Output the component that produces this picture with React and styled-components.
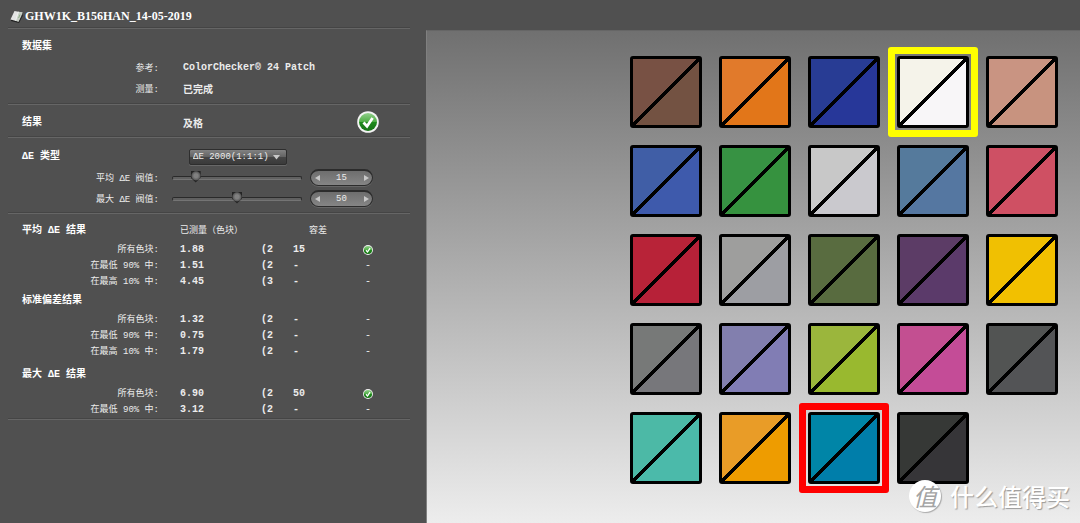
import React, { useState } from 'react';
import styled, { createGlobalStyle } from 'styled-components';

const GlobalStyle = createGlobalStyle`
  * {
    box-sizing: border-box;
  }
  body {
    margin: 0;
    background: #505050;
    color: #ececec;
    font-family: 'Liberation Mono', 'Noto Sans CJK SC', monospace;
    font-size: 9px;
  }
  button, input, select {
    font: inherit;
    color: inherit;
  }
`;

const Page = styled.div`
  display: flex;
  flex-direction: row;
  min-height: 100vh;
`;

const Sidebar = styled.aside`
  display: flex;
  flex-direction: column;
  flex: 0 0 426px;
  min-width: 0;
  padding: 0 16px 0 8px;
`;

const TitleBar = styled.header`
  display: flex;
  flex-direction: row;
  align-items: center;
  gap: 2px;
  height: 27px;
  padding: 5px 0 0 2px;
`;

const Title = styled.h1`
  margin: 0;
  font-family: 'Liberation Serif', 'Noto Sans CJK SC', serif;
  font-size: 12px;
  line-height: 20px;
  color: #fff;
`;

const Section = styled.section`
  display: flex;
  flex-direction: column;
  border-top: 1px solid #454545;
  box-shadow: inset 0 1px 0 #666;
  padding: ${({ pad }) => (pad ? pad : '8px 0 4px')};
`;

const Row = styled.div`
  display: grid;
  grid-template-columns: 151px 1fr auto;
  align-items: center;
  min-height: 21px;
`;

const Heading = styled.h2`
  margin: 0;
  padding-left: 14px;
  font-size: 10px;
  line-height: 21px;
  color: #fff;
`;

const Label = styled.label`
  text-align: right;
`;

const Value = styled.span`
  padding-left: 24px;
  font-size: 10px;
  font-weight: bold;
`;

const Status = styled.span`
  display: flex;
  justify-content: center;
  width: 22px;
  margin-right: 31px;
`;

const SelectBox = styled.div`
  position: relative;
  justify-self: start;
  margin-left: 30px;

  svg {
    position: absolute;
    top: 6px;
    right: 7px;
    pointer-events: none;
  }
`;

const Select = styled.select`
  appearance: none;
  display: block;
  width: 98px;
  height: 16px;
  padding: 0 0 0 3px;
  border: 1px solid #2e2e2e;
  border-radius: 2px;
  background: linear-gradient(#828282, #636363 48%, #454545 52%, #3a3a3a);
  box-shadow: 0 1px 0 #686868;
  line-height: 14px;
`;

const Slider = styled.input`
  appearance: none;
  width: 130px;
  height: 14px;
  margin: 0 0 0 13px;
  background: transparent;

  &::-webkit-slider-runnable-track {
    height: 4px;
    border: 1px solid #2a2a2a;
    border-bottom-color: #747474;
    border-radius: 2px;
    background: #606060;
  }

  &::-webkit-slider-thumb {
    appearance: none;
    width: 10px;
    height: 12px;
    margin-top: -6px;
    background: radial-gradient(circle at 50% 40%, #808080 0 2px, #5c5c5c 4px, #242424 5px);
    clip-path: polygon(0 0, 100% 0, 100% 60%, 50% 100%, 0 60%);
  }
`;

const Stepper = styled.div`
  display: flex;
  flex-direction: row;
  align-items: center;
  width: 63px;
  height: 17px;
  margin-right: 37px;
  border: 1px solid #2c2c2c;
  border-top-width: 2px;
  border-radius: 9px;
  background: linear-gradient(#6e6e6e, #858585);
  box-shadow: 0 1px 0 #666;
`;

const StepButton = styled.button`
  display: flex;
  align-items: center;
  justify-content: center;
  width: 12px;
  height: 12px;
  padding: 0;
  border: 0;
  background: none;
`;

const StepInput = styled.input`
  flex: 1;
  min-width: 0;
  height: 12px;
  padding: 0;
  border: 0;
  background: none;
  text-align: center;
`;

const Results = styled.table`
  width: 100%;
  margin-top: 1px;
  table-layout: fixed;
  border-collapse: collapse;

  th, td {
    height: 16px;
    padding: 0;
    text-align: left;
    line-height: 16px;
    white-space: nowrap;
  }
`;

const GroupRow = styled.tr`
  height: ${({ size }) => size}px;

  && th {
    vertical-align: bottom;
    font-weight: normal;
    line-height: 22px;
  }
  && th:first-child {
    padding-left: 14px;
    font-size: 10px;
    font-weight: bold;
    color: #fff;
  }
  && th:nth-child(4) {
    padding-left: 16px;
  }
`;

const ResultRow = styled.tr`
  && th {
    padding-right: 21px;
    text-align: right;
    font-weight: normal;
  }
  td {
    font-size: 10px;
    font-weight: bold;
  }
  td:last-child {
    text-align: center;
    font-weight: normal;
  }
  svg {
    display: block;
    margin: 0 auto;
  }
`;

const Canvas = styled.main`
  position: relative;
  display: flex;
  flex: 1;
  justify-content: flex-end;
  align-items: flex-start;
  margin-top: 30px;
  padding: 25px 22px 38px;
  border-top: 1px solid #666;
  border-left: 1px solid #808080;
  background: linear-gradient(#707070, #ededed);
`;

const Patches = styled.div`
  display: grid;
  grid-template-columns: repeat(5, 72px);
  gap: 17px;
`;

const Patch = styled.div`
  position: relative;
  height: 72px;
  border: 3px solid #000;
  border-radius: 3px;
  background: linear-gradient(
    135deg,
    ${({ top }) => top} calc(50% - 2px),
    #000 calc(50% - 2px),
    #000 calc(50% + 2px),
    ${({ bottom }) => bottom} calc(50% + 2px)
  );

  &::after {
    content: '';
    display: ${({ mark }) => (mark ? 'block' : 'none')};
    position: absolute;
    inset: -12px;
    border: 7px solid ${({ mark }) => mark};
    border-radius: 3px;
  }
`;

const Watermark = styled.div`
  position: absolute;
  right: 10px;
  bottom: 11px;
  display: flex;
  flex-direction: row;
  align-items: center;
  gap: 9px;
  font-family: 'Noto Sans CJK SC', sans-serif;
  font-size: 24px;
  font-weight: 500;
  line-height: 32px;
  color: #fff;
  text-shadow: 1px 1px 1px #999;
`;

const Seal = styled.span`
  width: 32px;
  height: 32px;
  border-radius: 50%;
  background: #fff;
  box-shadow: 1px 1px 1px #aaa;
  color: #a4a4a4;
  font-size: 24px;
  font-style: italic;
  font-weight: 400;
  line-height: 31px;
  text-align: center;
  text-shadow: none;
`;

const groups = [
  {
    name: '平均 ΔE 结果',
    size: 28,
    heads: ['已测量（色块）', '容差'],
    rows: [
      ['所有色块:', '1.88', '(2', '15', true],
      ['在最低 90% 中:', '1.51', '(2', '-', false],
      ['在最高 10% 中:', '4.45', '(3', '-', false],
    ],
  },
  {
    name: '标准偏差结果',
    size: 22,
    rows: [
      ['所有色块:', '1.32', '(2', '-', false],
      ['在最低 90% 中:', '0.75', '(2', '-', false],
      ['在最高 10% 中:', '1.79', '(2', '-', false],
    ],
  },
  {
    name: '最大 ΔE 结果',
    size: 26,
    rows: [
      ['所有色块:', '6.90', '(2', '50', true],
      ['在最低 90% 中:', '3.12', '(2', '-', false],
    ],
  },
];

const patches = [
  ['#785144', '#735242'],
  ['#e17a2b', '#e27619'],
  ['#283c94', '#273799'],
  ['#f5f3ea', '#f8f6f8', '#ffff00'],
  ['#c99482', '#c8937f'],
  ['#405ea6', '#3e5aac'],
  ['#379243', '#36923f'],
  ['#c8c8c8', '#cac9ce'],
  ['#557a9c', '#5577a1'],
  ['#ce5064', '#cf5063'],
  ['#b82338', '#b72138'],
  ['#9e9e9d', '#9d9ea3'],
  ['#596c40', '#586b3f'],
  ['#5c3c66', '#5b3a6a'],
  ['#f0c002', '#f2c000'],
  ['#777978', '#77777b'],
  ['#827fae', '#817db4'],
  ['#9bb63c', '#99b92f'],
  ['#c34f91', '#c44c97'],
  ['#525453', '#535456'],
  ['#4cb9a6', '#4bbaaa'],
  ['#e99c27', '#ee9c00'],
  ['#0085a7', '#007eaa', '#ff0000'],
  ['#363836', '#363538'],
];

const BookIcon = () => (
  <svg width="13" height="13" viewBox="0 0 13 13" aria-hidden="true">
    <path d="M1 9.5 8.5 12 13 4v1.6L9 13 1 11z" fill="#222" />
    <path d="M4.5 1 12.5 2.5 8.5 11.5.5 9.5z" fill="#e4e4e4" />
    <path d="M8.5 1.8 12.5 2.5 8.5 11.5 5.6 10.8z" fill="#c6cec4" />
    <path d="M8.5 1.8 5.6 10.8" stroke="#f8f8f8" strokeWidth="0.8" />
    <path d="M10 4.5 8.6 8" stroke="#8fae88" strokeWidth="1" />
  </svg>
);

const CheckIcon = ({ size }) => (
  <svg width={size} height={size} viewBox="0 0 22 22" role="img" aria-label="及格">
    <defs>
      <linearGradient id="checkFill" x1="0" y1="0" x2="0" y2="1">
        <stop offset="0" stopColor="#93cf8d" />
        <stop offset="0.48" stopColor="#4fae45" />
        <stop offset="0.52" stopColor="#1f8a1c" />
        <stop offset="1" stopColor="#177316" />
      </linearGradient>
    </defs>
    <circle cx="11" cy="11" r="10.8" fill="#f4f4f4" />
    <circle cx="11" cy="11" r="9" fill="url(#checkFill)" />
    <path d="M6.5 11.5 10 15.2 15.6 7" fill="none" stroke="#fff" strokeWidth="2.8" />
  </svg>
);

const Arrow = ({ points, width, height }) => (
  <svg width={width} height={height} viewBox={`0 0 ${width} ${height}`} aria-hidden="true">
    <polygon points={points} fill="#c8c8c8" />
  </svg>
);

const Threshold = ({ id, name, initial }) => {
  const [value, setValue] = useState(initial);

  return (
    <Row>
      <Label htmlFor={id}>{name}</Label>
      <Slider
        id={id}
        type="range"
        min="0"
        max="100"
        value={value}
        onChange={(e) => setValue(Number(e.target.value))}
      />
      <Stepper>
        <StepButton aria-label="减少" onClick={() => setValue(Math.max(0, value - 1))}>
          <Arrow width={5} height={6} points="5,0 5,6 0,3" />
        </StepButton>
        <StepInput
          aria-label={name}
          value={value}
          onChange={(e) => setValue(Number(e.target.value) || 0)}
        />
        <StepButton aria-label="增加" onClick={() => setValue(Math.min(100, value + 1))}>
          <Arrow width={5} height={6} points="0,0 5,3 0,6" />
        </StepButton>
      </Stepper>
    </Row>
  );
};

const Group = ({ group }) => {
  const heads = group.heads || ['', ''];

  return (
    <tbody>
      <GroupRow size={group.size}>
        <th>{group.name}</th>
        <th>{heads[0]}</th>
        <th></th>
        <th>{heads[1]}</th>
        <th></th>
      </GroupRow>
      {group.rows.map(([name, measured, count, tolerance, passed], idx) => (
        <ResultRow key={idx}>
          <th scope="row">{name}</th>
          <td>{measured}</td>
          <td>{count}</td>
          <td>{tolerance}</td>
          <td>{passed ? <CheckIcon size={10} /> : '-'}</td>
        </ResultRow>
      ))}
    </tbody>
  );
};

const App = () => {
  return (
    <Page>
      <GlobalStyle />
      <Sidebar>
        <TitleBar>
          <BookIcon />
          <Title>GHW1K_B156HAN_14-05-2019</Title>
        </TitleBar>
        <Section>
          <Heading>数据集</Heading>
          <Row>
            <Label as="span">参考:</Label>
            <Value>ColorChecker® 24 Patch</Value>
          </Row>
          <Row>
            <Label as="span">测量:</Label>
            <Value>已完成</Value>
          </Row>
        </Section>
        <Section pad="7px 0 3px">
          <Row>
            <Heading>结果</Heading>
            <Value>及格</Value>
            <Status>
              <CheckIcon size={22} />
            </Status>
          </Row>
        </Section>
        <Section pad="9px 0 3px">
          <Row>
            <Heading id="type">ΔE 类型</Heading>
            <SelectBox>
              <Select aria-labelledby="type">
                <option>ΔE 2000(1:1:1)</option>
              </Select>
              <Arrow width={7} height={5} points="0,0 7,0 3.5,4.5" />
            </SelectBox>
          </Row>
          <Threshold id="avg" name="平均 ΔE 阀值:" initial={15} />
          <Threshold id="max" name="最大 ΔE 阀值:" initial={50} />
        </Section>
        <Section pad="0">
          <Results>
            <colgroup>
              <col width="172" />
              <col width="81" />
              <col width="32" />
              <col width="33" />
              <col />
            </colgroup>
            {groups.map((group) => (
              <Group key={group.name} group={group} />
            ))}
          </Results>
        </Section>
        <Section pad="0 0 2px" />
      </Sidebar>
      <Canvas>
        <Patches>
          {patches.map(([top, bottom, mark], idx) => (
            <Patch key={idx} top={top} bottom={bottom} mark={mark} />
          ))}
        </Patches>
        <Watermark>
          <Seal>值</Seal>
          什么值得买
        </Watermark>
      </Canvas>
    </Page>
  );
};

export default App;
